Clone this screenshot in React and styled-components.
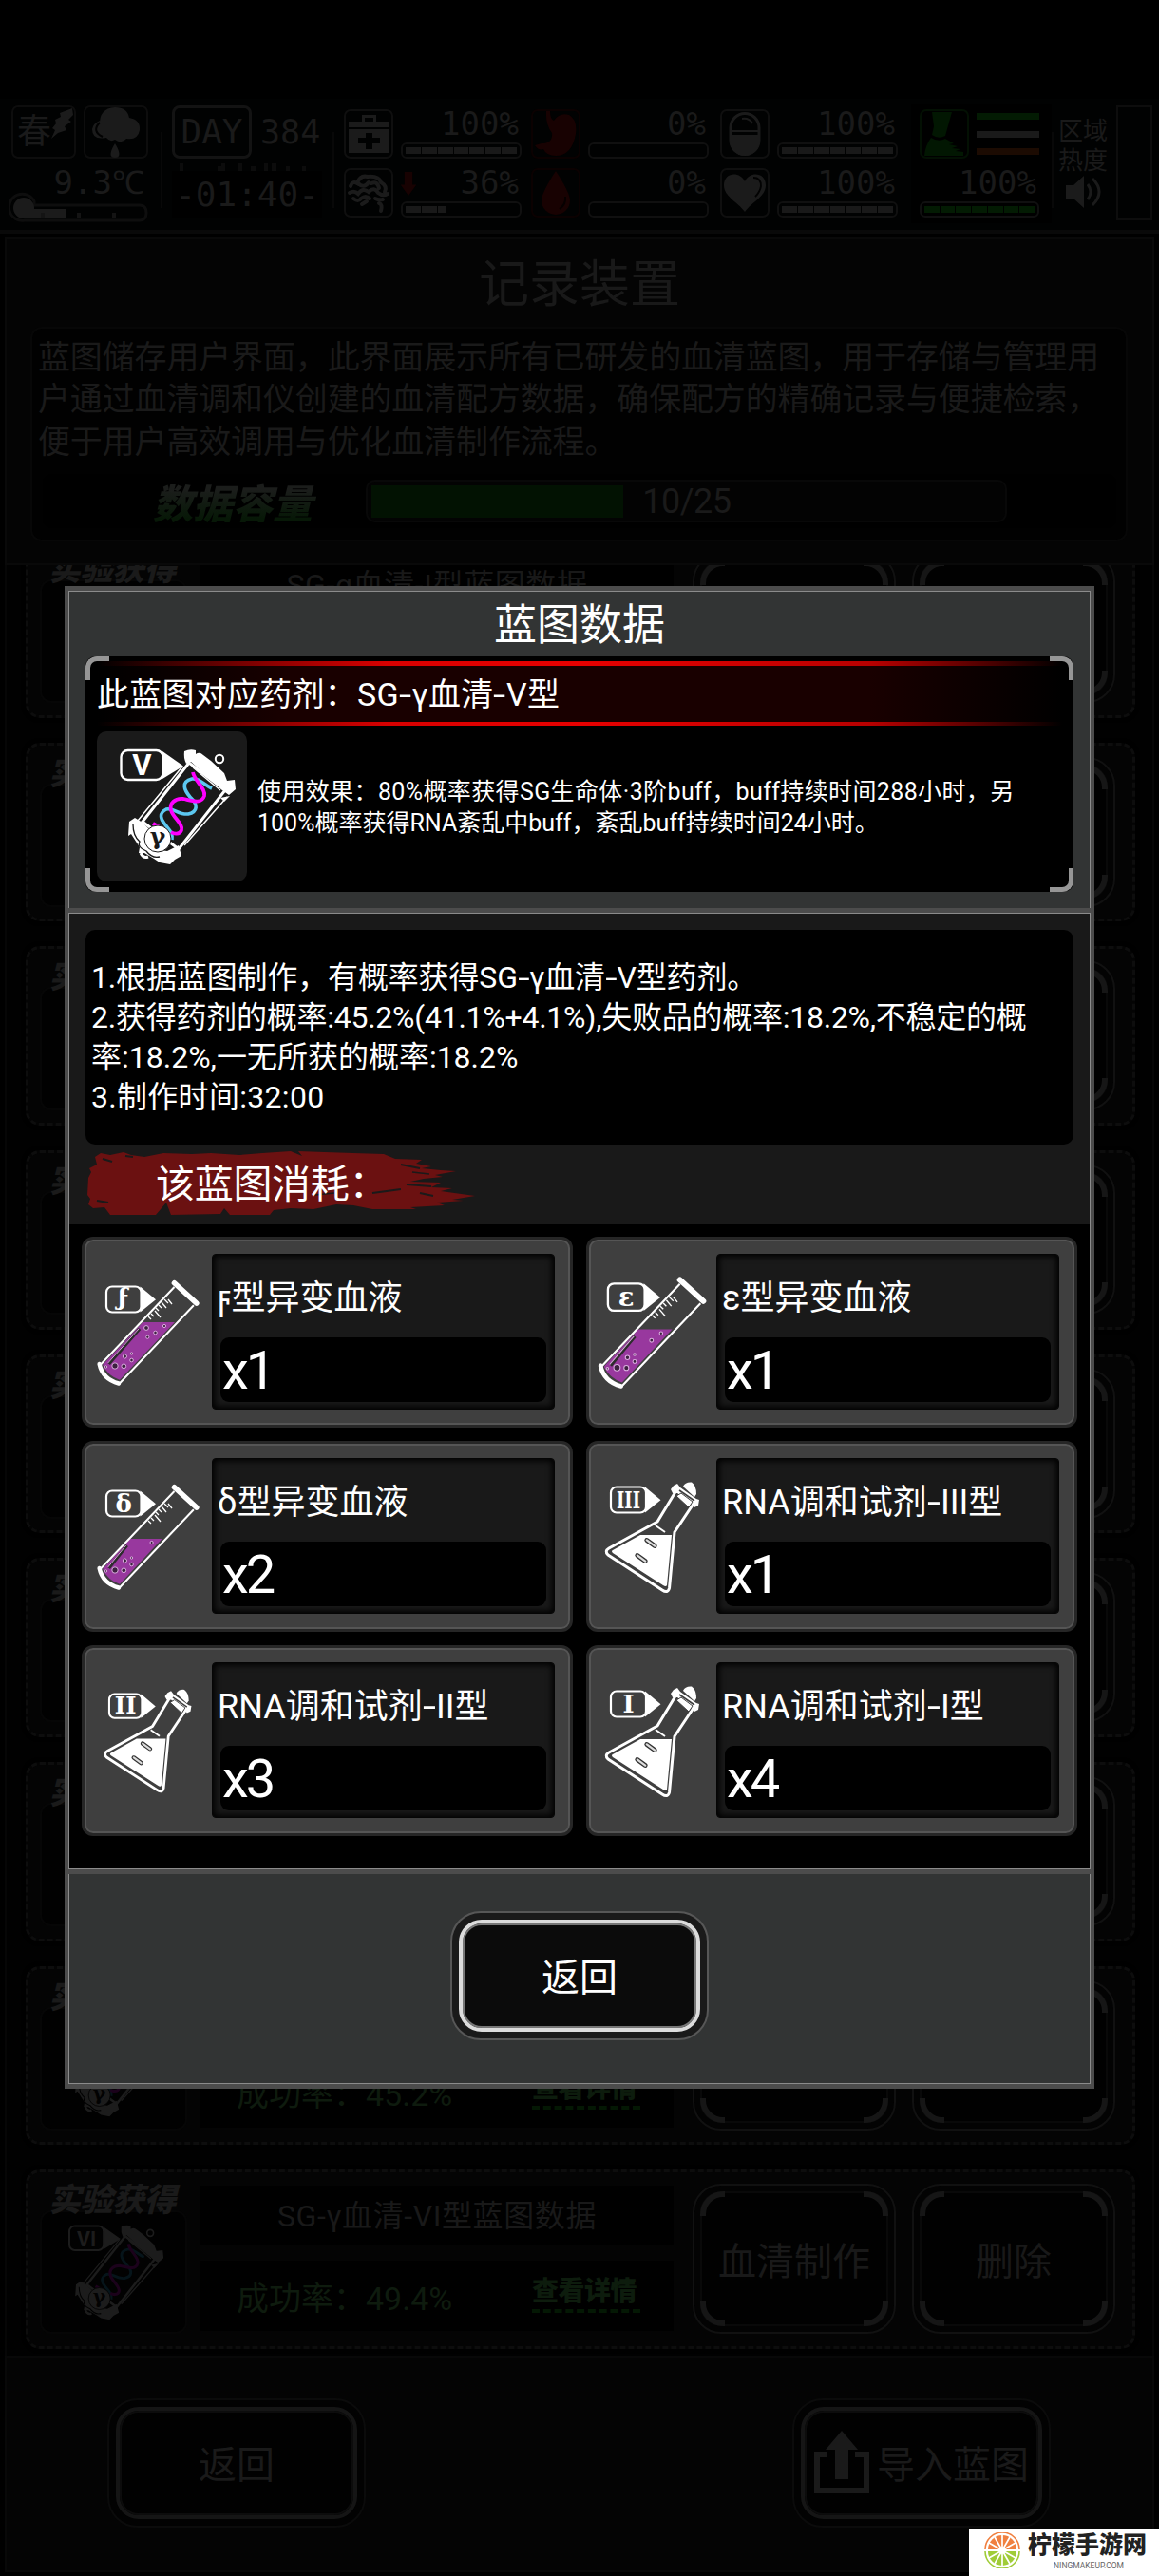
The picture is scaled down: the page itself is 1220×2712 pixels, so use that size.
import React from 'react'
import styled, { createGlobalStyle, css } from 'styled-components'

const sans = `Roboto, 'Noto Sans CJK SC', sans-serif`
const lcd = `'DejaVu Sans Mono', 'Liberation Mono', monospace`

const materials = [
  { name: 'ϝ型异变血液', count: 1, icon: 'tube', tag: 'ϝ', level: 51, size: 1 },
  { name: 'ε型异变血液', count: 1, icon: 'tube', tag: 'ε', level: 59, size: 1.06 },
  { name: 'δ型异变血液', count: 2, icon: 'tube', tag: 'δ', level: 64, size: 1 },
  { name: 'RNA调和试剂-III型', count: 1, icon: 'flask', tag: 'III', size: 1 },
  { name: 'RNA调和试剂-II型', count: 3, icon: 'flask', tag: 'II', size: 0.93 },
  { name: 'RNA调和试剂-I型', count: 4, icon: 'flask', tag: 'I', size: 1 }
]

const blueprints = [
  { id: 1, series: 'α', level: 'I' },
  { id: 2 },
  { id: 3 },
  { id: 4 },
  { id: 5 },
  { id: 6 },
  { id: 7 },
  { id: 8, series: 'γ', level: 'V', rate: '45.2%' },
  { id: 9, series: 'γ', level: 'VI', rate: '49.4%' }
]

//Icons-------------------------------------------------------------------------

const SerumIcon = ({ level, series, width = 158, height = 158, line = '#fff', back = '#1a1a1a', pink = '#ff00ff', blue = '#5cc8f0' }) => (
  <svg width={width} height={height} viewBox='0 0 158 158' fill='none'>
    <path d='M69 21 L91 36.5 L69 50 Z' fill={line} />
    <rect x='25.5' y='20' width='44' height='31' rx='7' fill={back} stroke={line} strokeWidth='2.4' />
    <text x='47.5' y='46' textAnchor='middle' fontFamily='Roboto, sans-serif' fontWeight='700' fontSize={level === 'VI' ? 26 : 31} fill={line}>
      {level}
    </text>
    <path d='M97 33 L48 95 L86 124 L135 62 Z' fill={back} stroke={line} strokeWidth='3' />
    <path d='M90 37 L43 94 M137 69 L92 120 M101 38 L130 62' stroke={line} strokeWidth='1.5' />
    <path
      d='M92 21 Q98 18 104 20 L104 24 Q108 21 112 25 L120 31 L134 44 L137 52 L145 51 L146 61 L139 67 L132 62 L99 32 L94 34 Q91 28 92 21 Z'
      fill={line}
    />
    <circle cx='129' cy='29' r='4.2' stroke={line} strokeWidth='2' />
    <path d='M130 70 L140 68 L134 74 Z' fill={line} />
    <path d='M121 60 C112 56 108 49 100 50 C88 53 92 62 98 69 C107 77 106 85 96 87 C86 88 80 80 73 82 C65 86 67 92 71 97 C76 104 80 106 79 114' stroke={blue} strokeWidth='3.6' />
    <path d='M101 43 C103 53 115 60 113 68 C110 77 100 73 91 71 C82 70 76 76 78 83 C80 91 91 97 89 104 C87 109 81 108 78 106 M59 97 L66 101' stroke={pink} strokeWidth='3.8' />
    <path
      d='M40 91 L48 96 L56 104 L50 112 L58 124 L74 126 L86 120 L89 131 L82 135 L77 140 L66 138 L60 134 L50 128 L44 128 L45 122 L36 108 L33 110 L34 95 Z'
      fill={line}
    />
    <path d='M38 98 Q38 110 45 116 Q42 122 52 126 Q58 134 66 132' stroke={back} strokeWidth='1.3' />
    <circle cx='64' cy='113' r='14' fill={line} stroke={back} strokeWidth='1' />
    <path d='M46 128 q3 6 8 4' stroke={line} strokeWidth='3' />
    <text x='64' y='119' textAnchor='middle' fontFamily='DejaVu Serif, serif' fontWeight='700' fontSize='25' fill={back}>
      {series}
    </text>
  </svg>
)

const TagShape = ({ x, w, tag }) => (
  <>
    <path d={`M${x + w - 1} 13.5 L${x + w + 15.5} 27.3 L${x + w - 1} 40.5 Z`} fill='#fff' />
    <rect x={x} y='13.5' width={w} height='27' rx='6' fill='#3f3f3f' stroke='#fff' strokeWidth='2.2' />
    <text x={x + w / 2} y={tag === 'ϝ' ? 33 : 36} textAnchor='middle' fontFamily='DejaVu Serif, serif' fontWeight='700' fontSize={tag.length > 2 ? 25 : 26} textLength={tag.length === 3 ? 25 : undefined} lengthAdjust='spacingAndGlyphs' fill='#fff'>
      {tag}
    </text>
  </>
)

const TubeIcon = ({ tag, level, size }) => {
  // the sides are slanted, so the surface shifts right as the level rises
  const shift = (level - 51) * 1.03
  return (
    <svg width={118 * size} height={122 * size} viewBox='0 0 118 122' fill='none'>
      <path d='M86.5 14 L7.6 97 Q12 111 27.6 116.7 L106.9 33.3 Z' fill='#3f3f3f' />
      <path d={`M${53.3 - shift} ${level} L${87 - shift} ${level} L29 111.7 Q17 108 11 96 Z`} fill='#98389e' />
      <path d={`M${50 - shift} ${level + 7} L17.6 95`} stroke='#2c2c2c' strokeWidth='3.4' />
      <path d={`M${49 - shift} ${level + 7} L16.6 94`} stroke='#d9a5dc' strokeWidth='1' />
      <path d='M86.5 14 L7.6 97 M106.9 33.3 L27.6 116.7' stroke='#fff' strokeWidth='2' />
      <path d='M7.6 95 Q11 111 28 115.5' stroke='#fff' strokeWidth='4.4' strokeLinecap='round' />
      <path d='M86.5 9.8 L109.8 31' stroke='#fff' strokeWidth='5.6' strokeLinecap='round' />
      <path d='M80 27 l4 5 M76 27 l4 4 M73 30 l5 6 M70 33 l3 3 M67 36 l3 3 M66 39 l6 7 M62 42 l3 3 M59 45 l3 3' stroke='#fff' strokeWidth='1.3' />
      <g fill='#3c213f' stroke='#dcaee0' strokeWidth='1'>
        <circle cx={76 - shift} cy={level + 4} r='1.6' />
        {level < 60 && <circle cx={66.5 - shift} cy={level + 11} r='1.8' />}
        {level < 52 && <circle cx='57' cy='57' r='2.4' />}
        {level < 52 && <circle cx='58.3' cy='66.7' r='1.6' />}
        <circle cx='34.4' cy='87' r='2.1' />
        <circle cx='41.5' cy='84' r='1.2' />
        <circle cx='33.3' cy='97.3' r='2.4' />
        <circle cx='41.5' cy='91' r='1.8' />
        <circle cx='24' cy='97' r='3.2' />
        <circle cx='14.5' cy='98' r='1.2' />
      </g>
      <TagShape x={15} w={36.5} tag={tag} />
    </svg>
  )
}

const FlaskIcon = ({ tag, size }) => (
  <svg width={118 * size} height={130 * size} viewBox='2 0 118 130' fill='none'>
    <path
      d='M86 17 L66 50 L15 78 Q10 81 14 85 L71 122 Q77 126 78.5 120 L84 61 L104 31'
      fill='#3f3f3f'
      stroke='#fff'
      strokeWidth='3'
      strokeLinejoin='round'
    />
    <path d='M48 64 L81 64 L76 117 Q75 119 72 117 L19 83 Q17 81 19 80 Z' fill='#fff' />
    <path d='M64 54 L74 61' stroke='#fff' strokeWidth='2' />
    <g fill='#ddd' stroke='#333' strokeWidth='1.3'>
      <rect x='-7' y='-1.8' width='14' height='3.6' rx='1.8' transform='translate(59 72.5) rotate(36)' />
      <rect x='-7' y='-1.8' width='14' height='3.6' rx='1.8' transform='translate(49 88.5) rotate(36)' />
    </g>
    <path d='M93 13 Q95 8 102 8.5 Q107 12 107 21 L105 24 Z' fill='#fff' />
    <path d='M83 12 L87 10 L90 14 L107 26 L110 27 L109 33 L105 35 L102 31 L87 20 L82 20 L80 16 Z' fill='#fff' />
    <path d='M89 17 L105 28' stroke='#3f3f3f' strokeWidth='1.6' />
    <path d='M86 23 L91 20 L103 29 L99 35 Z' fill='#fff' stroke='#3f3f3f' strokeWidth='1' />
    <TagShape x={17} w={37} tag={tag} />
  </svg>
)

const BrushStroke = () => (
  <svg width='410' height='68' viewBox='0 0 410 68' fill='#6b1111'>
    <path d='M8 6 L14 2 L24 4 L38 1 L46 4 L60 6 L80 2 L110 3 L130 2 L160 4 L184 2 L214 0 L226 5 L222 0 L250 1 L280 2 L312 3 L324 8 L352 9 L346 13 L362 16 L352 18 L372 20 L388 21 L366 25 L374 27 L354 29 L340 32 L372 33 L362 38 L384 39 L372 42 L408 47 L384 51 L396 52 L368 54 L376 57 L340 59 L346 61 L300 61 L280 57 L262 56 L238 61 L214 60 L196 62 L192 67 L150 67 L144 60 L140 66 L88 67 L83 54 L72 67 L24 67 L18 59 L6 60 L1 56 L3 50 L0 46 L1 28 L4 22 L2 18 L10 14 Z' />
    <g stroke='#1a1a1a' fill='none'>
      <path d='M16 8 l10 3 M40 5 l8 1 M10 52 l12 2 M300 44 l30 -4 M336 35 l26 2 M330 14 l20 4 M350 44 l14 3' strokeWidth='2' />
      <path d='M240 46 l20 -2 M342 22 l18 2' strokeWidth='1.4' />
    </g>
  </svg>
)

const Kit = () => (
  <svg width='42' height='42' viewBox='0 0 42 42'>
    <path fill='#1b1b1b' fillRule='evenodd' d='M14 8 V1 H29 V8 H42 V14 H0 V8 Z M17 8 H26 V4 H17 Z M0 16 H42 V41 H0 Z M18 20 V25 H10 V31 H18 V37 H25 V31 H33 V25 H25 V20 Z' />
  </svg>
)

const Brain = () => (
  <svg width='46' height='44' viewBox='0 0 46 44' fill='none' stroke='#1b1b1b' strokeWidth='4' strokeLinecap='round'>
    <path d='M4 15 Q6 9 11 12 Q14 3 22 5 Q34 4 36 11 Q43 15 40 21 M12 12 Q18 18 23 11 M26 12 Q32 9 34 17 M3 22 Q8 19 12 23 Q17 16 23 21 Q29 15 33 22 Q38 26 43 23 M7 28 Q12 32 15 28 Q20 24 24 28 M30 28 Q34 30 38 29 M34 33 Q38 34 36 41 M16 34 L21 31' />
  </svg>
)

const Stomach = () => (
  <svg width='44' height='48' viewBox='0 0 44 48' fill='#180202'>
    <path d='M12 0 L16 0 Q16 8 20 10 Q26 1 36 4 Q45 9 43 24 Q39 47 22 47 Q12 47 9 40 Q4 42 0 36 L7 34 Q19 34 18 23 Q11 14 12 0 Z' />
  </svg>
)

const Drop = () => (
  <svg width='32' height='46' viewBox='0 0 32 46'>
    <path fill='#180202' d='M16 0 Q31 23 31 31 A15 15 0 0 1 1 31 Q1 23 16 0 Z' />
    <path fill='none' stroke='#060000' strokeWidth='2' d='M26 27 Q27 35 20 40' />
  </svg>
)

const Capsule = () => (
  <svg width='34' height='46' viewBox='0 0 34 46' fill='none'>
    <rect x='2' y='1.5' width='30' height='43' rx='15' stroke='#1b1b1b' strokeWidth='3' />
    <path d='M1 24 H33 V30 A16 16 0 0 1 1 30 Z' fill='#1b1b1b' />
    <path d='M1 20 H33 M14 7 Q22 6 25 12' stroke='#1b1b1b' strokeWidth='2' />
  </svg>
)

const Heart = () => (
  <svg width='46' height='42' viewBox='0 0 46 42'>
    <path fill='#1b1b1b' d='M23 9 C18 -2 1 -1 1 13 C1 25 15 30 23 41 C31 30 45 25 45 13 C45 -1 28 -2 23 9 Z' />
    <path fill='none' stroke='#020202' strokeWidth='1.8' d='M32 5 Q40 5 40 14 Q39 20 34 25' />
  </svg>
)

const Foot = () => (
  <svg width='42' height='46' viewBox='0 0 42 46' fill='#021702'>
    <path d='M8 0 H29 L22 25 Q15 29 8 24 L10 15 Z M7 27 Q15 32 22 28 L31 33 L26 34 L35 36 L29 38 L38 39 L33 41 L41 42 V46 H0 Q1 35 7 27 Z' />
  </svg>
)

const Speaker = () => (
  <svg width='38' height='36' viewBox='0 0 38 36' fill='none' stroke='#1b1b1b' strokeWidth='3'>
    <path d='M0 11 H8 L19 1 V35 L8 25 H0 Z' fill='#1b1b1b' stroke='none' />
    <path d='M23 10 Q29 18 23 26 M28 4 Q42 18 28 32' />
  </svg>
)

const Leaf = () => (
  <svg width='24' height='34' viewBox='0 0 24 34'>
    <path fill='#1b1b1b' d='M0 33 L4 24 L1 22 L5 17 L4 13 L10 10 L9 6 L22 1 L23 8 L18 13 L21 15 L14 20 L16 24 L7 27 Z' />
  </svg>
)

const Cloud = () => (
  <svg width='52' height='54' viewBox='0 0 52 54' fill='#1b1b1b'>
    <path d='M9 20 Q8 2 25 1 Q38 1 40 12 Q52 14 51 25 Q49 36 37 34 Q32 40 25 35 Q20 38 16 33 Q1 36 1 24 Q2 18 9 15 Z' />
    <path d='M25 39 Q34 54 25 54 Q16 54 25 39 Z' />
    <path d='M9 17 Q0 26 12 32' fill='none' stroke='#020202' strokeWidth='2' />
  </svg>
)

const ShareIcon = () => (
  <svg width='58' height='66' viewBox='0 0 58 66' fill='#1a1a1a'>
    <path d='M29 0 L46 20 H36 V51 H22 V20 H12 Z' />
    <path d='M14 22 H0 V66 H58 V22 H43 V28 H52 V60 H6 V28 H14 Z' />
  </svg>
)

const LemonLogo = () => (
  <svg width='42' height='38' viewBox='0 0 42 38' fill='none'>
    <path d='M3 18 A18 18 0 0 1 39 18' stroke='#f08040' strokeWidth='1.6' />
    <path d='M3 20 A18 18 0 0 0 39 20' stroke='#a0cc38' strokeWidth='1.6' />
    <path d='M6 18 A15 15 0 0 1 36 18 Z' fill='#f08040' />
    <path d='M6 20 A15 15 0 0 0 36 20 Z' fill='#a0cc38' />
    <path d='M0 19 H42 M21 3 V35 M13 5 L29 33 M29 5 L13 33 M7 11 L35 27 M35 11 L7 27' stroke='#fff' strokeWidth='1.7' />
    <circle cx='21' cy='19' r='3.5' fill='#fff' />
  </svg>
)

//Parts-------------------------------------------------------------------------

const Meter = ({ icon, value, filled = 0, color, tone, down }) => (
  <MeterBox>
    <IconFrame $tone={tone}>{icon}</IconFrame>
    <MeterSide>
      <MeterValue>
        {down && <DownArrow viewBox='0 0 16 24'><path d='M4 0 H12 V13 H16 L8 24 L0 13 H4 Z' /></DownArrow>}
        {value}
      </MeterValue>
      <MeterBar $color={color}>
        {[0, 1, 2, 3, 4, 5, 6].map(i => (
          <i key={i} style={{ width: `${Math.max(0, Math.min(1, filled - i)) * 16}px` }} />
        ))}
      </MeterBar>
    </MeterSide>
  </MeterBox>
)

const BlueprintRow = ({ item }) => (
  <Row>
    <RowIcon>
      <Source>实验获得</Source>
      <RowIconBox>
        {item.level && (
          <SerumIcon level={item.level} series={item.series} width={130} height={130} line='#1c1c1c' back='#020202' pink='#1b021b' blue='#06141a' />
        )}
      </RowIconBox>
    </RowIcon>
    <RowInfo>
      <RowName>{item.level && `SG-${item.series}血清-${item.level}型蓝图数据`}</RowName>
      <RowRate>
        {item.rate && <span>成功率：{item.rate}</span>}
        {item.rate && <Details>查看详情</Details>}
      </RowRate>
    </RowInfo>
    <RowButton><Corners $color='#161616' $size={26} $weight={6} $radius={24} />{item.id === 9 && '血清制作'}</RowButton>
    <RowButton><Corners $color='#161616' $size={26} $weight={6} $radius={24} />{item.id === 9 && '删除'}</RowButton>
  </Row>
)

const Corners = props => (
  <>
    <Corner {...props} $v='top' $h='left' />
    <Corner {...props} $v='top' $h='right' />
    <Corner {...props} $v='bottom' $h='left' />
    <Corner {...props} $v='bottom' $h='right' />
  </>
)

const BlueprintDialog = () => (
  <Dialog>
    <DialogHead>
      <DialogTitle>蓝图数据</DialogTitle>
      <EffectBox>
        <Corners $color='#969696' $size={25} $weight={5} $radius={12} />
        <EffectName>此蓝图对应药剂：SG<Dash>-</Dash>γ血清<Dash>-</Dash>V型</EffectName>
        <EffectBody>
          <EffectIcon><SerumIcon level='V' series='γ' /></EffectIcon>
          <EffectText>
            <TextLine $track={0.38}>使用效果：80%概率获得SG生命体·3阶buff，buff持续时间288小时，另</TextLine>
            <TextLine>100%概率获得RNA紊乱中buff，紊乱buff持续时间24小时。</TextLine>
          </EffectText>
        </EffectBody>
      </EffectBox>
    </DialogHead>
    <DialogBody>
      <Notes>
        <TextLine $track={-0.15}>1.根据蓝图制作，有概率获得SG<Dash>-</Dash>γ血清<Dash>-</Dash>V型药剂。</TextLine>
        <TextLine $track={-0.25}>2.获得药剂的概率:45.2%(41.1%+4.1%),失败品的概率:18.2%,不稳定的概</TextLine>
        <TextLine>率:18.2%,一无所获的概率:18.2%</TextLine>
        <TextLine $track={0.3}>3.制作时间:32:00</TextLine>
      </Notes>
      <CostBanner>
        <BrushStroke />
        <CostTitle>该蓝图消耗：</CostTitle>
      </CostBanner>
      <Materials>
        {materials.map(m => (
          <Card key={m.name}>
            <CardIcon>
              {m.icon === 'tube' ? <TubeIcon {...m} /> : <FlaskIcon {...m} />}
            </CardIcon>
            <CardPanel>
              <CardName>
                {m.name.split('-').map((part, i) => (
                  <React.Fragment key={part}>{i > 0 && <Dash>-</Dash>}{part}</React.Fragment>
                ))}
              </CardName>
              <CardCount>x{m.count}</CardCount>
            </CardPanel>
          </Card>
        ))}
      </Materials>
    </DialogBody>
    <DialogFoot>
      <PillButton><span>返回</span></PillButton>
    </DialogFoot>
  </Dialog>
)

const App = () => (
  <Screen>
    <GlobalStyle />
    <StatusBar>
      <Weather>
        <Square><Season>春</Season><Leaf /></Square>
        <Square><Cloud /></Square>
        <Temperature>9.3℃</Temperature>
        <Thermometer viewBox='0 0 148 34' fill='none'>
          <path d='M27 14 H138 Q145 14 145 22 Q145 30 138 30 H17 A14 14 0 1 1 27 10 Z' stroke='#0e0e0e' strokeWidth='3' />
          <circle cx='16' cy='17' r='11' fill='#1b1b1b' />
          <path d='M16 18 H60 V27 H16 Z' fill='#1b1b1b' />
          <path d='M36 22 v6 M74 22 v6 M111 22 v6' stroke='#141414' strokeWidth='4' />
        </Thermometer>
      </Weather>
      <Rule />
      <Clock>
        <DayRow><Day>DAY</Day><span>384</span></DayRow>
        <Ticks viewBox='0 0 150 8'>
          <path d='M8 0h4v8h-4z M48 3h4v-3h4v8h-8z M70 0h4v8h-4z M83 3h5v5h-5z M97 0h4v8h-4z M105 0h5v8h-5z M120 3h4v5h-4z M137 3h4v5h-4z' />
        </Ticks>
        <Time>-01:40-</Time>
      </Clock>
      <Rule />
      <Meters>
        <Meter icon={<Kit />} value='100%' filled={7} />
        <Meter icon={<Stomach />} value='0%' tone='#0b0101' />
        <Meter icon={<Capsule />} value='100%' filled={7} />
        <Meter icon={<Brain />} value='36%' filled={2.5} down />
        <Meter icon={<Drop />} value='0%' tone='#0b0101' />
        <Meter icon={<Heart />} value='100%' filled={7} />
      </Meters>
      <Body>
        <IconFrame $tone='#031003'><Foot /></IconFrame>
        <Lines><Line $color='#031b03' /><Line $color='#1a1a1a' /><Line $color='#1c0b02' /></Lines>
        <BodyValue>
          <MeterValue>100%</MeterValue>
          <MeterBar $color='#031b03'>
            {[0, 1, 2, 3, 4, 5, 6].map(i => <i key={i} />)}
          </MeterBar>
        </BodyValue>
      </Body>
      <Rule />
      <Region>区域<br />热度<Speaker /></Region>
      <HeatGauge />
    </StatusBar>
    <Intro>
      <IntroTitle>记录装置</IntroTitle>
      <IntroBox>
        <IntroText>
          蓝图储存用户界面，此界面展示所有已研发的血清蓝图，用于存储与管理用户通过血清调和仪创建的血清配方数据，确保配方的精确记录与便捷检索，便于用户高效调用与优化血清制作流程。
        </IntroText>
        <Capacity>
          <CapacityLabel>数据容量</CapacityLabel>
          <CapacityBar>
            <CapacityFill style={{ width: `${(10 / 25) * 100}%` }} />
            10/25
          </CapacityBar>
        </Capacity>
      </IntroBox>
    </Intro>
    <List>
      {blueprints.map(b => <BlueprintRow key={b.id} item={b} />)}
    </List>
    <BottomBar>
      <PillButton $dim><span>返回</span></PillButton>
      <PillButton $dim><span><ShareIcon />导入蓝图</span></PillButton>
    </BottomBar>
    <Overlay>
      <BlueprintDialog />
    </Overlay>
    <Watermark>
      <LemonLogo />
      <div>
        <SiteName>柠檬手游网</SiteName>
        <SiteUrl>NINGMAKEUP.COM</SiteUrl>
      </div>
    </Watermark>
  </Screen>
)

//Style-------------------------------------------------------------------------

const GlobalStyle = createGlobalStyle`
  * {
    box-sizing: border-box;
  }
  body {
    margin: 0;
    background: #000;
  }
  p {
    margin: 0;
  }
  button {
    font: inherit;
    padding: 0;
  }
`

const Screen = styled.div`
  position: relative;
  display: flex;
  flex-direction: column;
  width: 1220px;
  height: 2712px;
  padding-top: 104px;
  overflow: hidden;
  background: #000;
  color: #1a1a1a;
  font-family: ${sans};
`

const StatusBar = styled.div`
  display: flex;
  align-items: flex-start;
  height: 142px;
  padding: 7px 7px 0 12px;
  background: #010202;
  border-bottom: 4px solid #090909;
`

const Rule = styled.div`
  width: 2px;
  height: 80px;
  margin-top: 28px;
  background: #080808;
`

const Weather = styled.div`
  display: grid;
  grid-template-columns: 68px 68px;
  gap: 0 8px;
  width: 145px;
  margin-right: 12px;
`

const Square = styled.div`
  display: flex;
  align-items: center;
  justify-content: center;
  height: 56px;
  border: 2px solid #0d0d0d;
  border-radius: 7px;
`

const Season = styled.span`
  font-size: 36px;
  line-height: 50px;

  & + svg {
    align-self: flex-start;
    margin-right: -4px;
  }
`

const Temperature = styled.div`
  grid-column: 1 / 3;
  padding-right: 4px;
  font: 34px/34px ${lcd};
  text-align: right;
  margin-top: 8px;
`

const Thermometer = styled.svg`
  grid-column: 1 / 3;
  width: 148px;
  height: 34px;
  margin: -7px 0 0 -3px;
`

const Clock = styled.div`
  width: 158px;
  margin: 0 11px 0 10px;
`

const DayRow = styled.div`
  display: flex;
  align-items: center;
  gap: 9px;
  font: 35px/56px ${lcd};
`

const Day = styled.div`
  width: 84px;
  height: 56px;
  border: 3px solid #131313;
  border-radius: 8px;
  font-size: 36px;
  line-height: 50px;
  text-align: center;
`

const Ticks = styled.svg`
  display: block;
  width: 150px;
  height: 8px;
  margin-top: 5px;
  fill: #0c0c0c;
`

const Time = styled.div`
  height: 50px;
  background: #000;
  font: 36px/50px ${lcd};
  text-align: center;
`

const Meters = styled.div`
  display: grid;
  grid-template-columns: 187px 189px 187px;
  gap: 10px;
  margin: 4px 14px 0 10px;
`

const MeterBox = styled.div`
  display: flex;
  gap: 8px;
  height: 52px;
`

const IconFrame = styled.div`
  display: flex;
  align-items: center;
  justify-content: center;
  width: 52px;
  height: 52px;
  border: 2px solid ${p => p.$tone || '#0f0f0f'};
  border-radius: 7px;
`

const MeterSide = styled.div`
  width: 127px;
`

const MeterValue = styled.div`
  display: flex;
  justify-content: flex-end;
  height: 35px;
  padding-right: 3px;
  font: 34px/31px ${lcd};
`

const DownArrow = styled.svg`
  width: 18px;
  height: 25px;
  margin: 4px auto 0 -1px;
  fill: #180202;
`

const MeterBar = styled.div`
  display: flex;
  gap: 1px;
  height: 17px;
  padding: 3px;
  border: 2px solid #101010;
  border-radius: 6px;

  i {
    width: 16px;
    background: ${p => p.$color || '#191919'};
  }
`

const Body = styled.div`
  display: grid;
  grid-template-columns: 52px 66px;
  gap: 10px 8px;
  width: 148px;
  margin-top: -2px;
  padding: 6px 0 6px 9px;
  background: #000;
`

const Lines = styled.div`
  display: flex;
  flex-direction: column;
  justify-content: space-between;
  padding: 4px 0;
`

const Line = styled.div`
  height: 7px;
  background: ${p => p.$color};
`

const BodyValue = styled.div`
  grid-column: 1 / 3;
`

const Region = styled.div`
  width: 54px;
  margin: 12px 7px 0 5px;
  font-size: 26px;
  line-height: 31px;

  svg {
    display: block;
    margin: -1px 0 0 8px;
  }
`

const HeatGauge = styled.div`
  flex: 1;
  height: 121px;
  border: 2px solid #0d0d0d;
`

const Intro = styled.div`
  height: 345px;
  margin: 4px 5px 0;
  padding: 15px 27px 0;
  border: 2px solid #090909;
  background: #040404;
`

const IntroTitle = styled.h1`
  margin: 0;
  color: #191919;
  font-size: 53px;
  font-weight: 400;
  line-height: 66px;
  text-align: center;
`

const IntroBox = styled.div`
  height: 226px;
  margin: 11px -1px 0 -2px;
  padding: 8px 9px 0 6px;
  border: 2px solid #070707;
  border-radius: 12px;
  background: #010101;
`

const IntroText = styled.p`
  width: 1130px;
  height: 145px;
  font-size: 34px;
  letter-spacing: -0.15px;
  line-height: 44.3px;
`

const Capacity = styled.div`
  display: flex;
  align-items: center;
  height: 57px;
  margin: 0 1px 0 5px;
  padding-left: 116px;
  border-radius: 10px;
  background: #000;
`

const CapacityLabel = styled.span`
  width: 224px;
  font-size: 42px;
  font-style: italic;
  font-weight: 900;
  background: linear-gradient(#1b1d1b 30%, #071807 80%);
  background-clip: text;
  color: transparent;
`

const CapacityBar = styled.div`
  display: flex;
  align-items: center;
  gap: 20px;
  width: 675px;
  height: 45px;
  padding: 4px;
  border: 2px solid #080808;
  border-radius: 10px;
  background: #030303;
  font-size: 36px;
  letter-spacing: -0.5px;
`

const CapacityFill = styled.div`
  height: 34px;
  background: #021202;
`

const List = styled.div`
  display: flex;
  flex-direction: column;
  justify-content: flex-end;
  gap: 16px;
  height: 1885px;
  margin: 0 5px;
  padding: 0 15px 2px;
  overflow: hidden;
  border: solid #060606;
  border-width: 0 2px;
  background: #010101;
`

const Row = styled.div`
  display: flex;
  flex-shrink: 0;
  width: 1178px;
  height: 198.7px;
  padding: 17px 0 0 17px;
  border: 5px solid #000;
  border-radius: 20px;
  background: #040404;
  outline: 3px dashed #0d0d0d;
  outline-offset: -8px;
`

const RowIcon = styled.div`
  flex-shrink: 0;
  width: 151px;
  margin-right: 16px;
`

const Source = styled.div`
  position: relative;
  height: 28px;
  padding-left: 7px;
  font-size: 34px;
  font-style: italic;
  font-weight: 900;
  line-height: 30px;
  letter-spacing: -0.5px;
`

const RowIconBox = styled.div`
  display: flex;
  align-items: center;
  justify-content: center;
  height: 126px;
  padding-right: 6px;
  border-radius: 10px;
  background: #010101;
  box-shadow: 0 0 0 2px #060606;
`

const RowInfo = styled.div`
  flex-shrink: 0;
  width: 498px;
  margin-right: 20px;
`

const RowName = styled.div`
  height: 62px;
  margin-bottom: 17px;
  background: #000;
  color: #191919;
  font-size: 32px;
  line-height: 64px;
  letter-spacing: 0.6px;
  text-align: center;
`

const RowRate = styled.div`
  display: flex;
  align-items: center;
  justify-content: space-between;
  height: 74px;
  padding: 0 35px 0 38px;
  background: #000;
  color: #0e1b0e;
  font-size: 34px;
`

const Details = styled.span`
  width: 114px;
  margin-top: -4px;
  border-bottom: 4px dashed #041804;
  color: #0d1c0d;
  font-size: 28px;
  font-weight: 900;
  line-height: 36px;
  letter-spacing: -0.5px;
`

const RowButton = styled.button`
  position: relative;
  width: 214px;
  height: 158px;
  margin: -2px 17px 0 0;
  border: 2px solid #111;
  border-radius: 30px;
  background: #010101;
  box-shadow: inset 0 0 0 6px #030303, inset 0 0 0 8px #090909;
  color: #191919;
  font-size: 40px;
  flex-shrink: 0;

  &:last-child {
    margin-right: 0;
  }

  /* brackets sit on the inner ring */
  & > i {
    margin: 6px;
  }
`

const Corner = styled.i`
  position: absolute;
  ${p => p.$v}: 0;
  ${p => p.$h}: 0;
  width: ${p => p.$size}px;
  height: ${p => p.$size}px;
  ${p => css`
    border-${p.$v}: ${p.$weight}px solid ${p.$color};
    border-${p.$h}: ${p.$weight}px solid ${p.$color};
    border-${p.$v}-${p.$h}-radius: ${p.$radius}px;
  `}
`

const BottomBar = styled.div`
  display: flex;
  justify-content: space-between;
  height: 228px;
  margin: 0 5px;
  padding: 43px 107px 0 106px;
  border: 2px solid #080808;
  background: #040404;
`

const PillButton = styled.button`
  width: 272px;
  height: 136px;
  padding: 7px;
  border: 2px solid ${p => (p.$dim ? '#0b0b0b' : '#575757')};
  border-radius: 32px;
  background: ${p => (p.$dim ? '#020202' : '#1a1a1a')};
  color: ${p => (p.$dim ? '#1a1a1a' : '#fff')};
  font-size: 40px;

  span {
    display: flex;
    align-items: center;
    justify-content: center;
    gap: 8px;
    height: 118px;
    padding-bottom: 2px;
    border: 4px solid ${p => (p.$dim ? '#151515' : '#dcdcdc')};
    border-radius: 24px;
    background: ${p => (p.$dim ? '#010101' : '#0b0b0b')};
    box-shadow: inset 0 0 0 2px ${p => (p.$dim ? '#0c0c0c' : '#777')};
  }
`

const Overlay = styled.div`
  position: absolute;
  inset: 0;
  display: flex;
  align-items: center;
  justify-content: center;
  padding-top: 104px;
`

const Dialog = styled.div`
  display: grid;
  grid-template-rows: 334px 1007px 221px;
  gap: 5px;
  width: 1084px;
  height: 1582px;
  border: solid #4c4c4c;
  border-width: 5px 4px;
  background: #4c4c4c;
  color: #fff;
`

const DialogHead = styled.div`
  padding: 0 17px;
  border: 1px solid #8b8b8b;
  border-bottom: 0;
  background: #323434;
`

const DialogTitle = styled.h2`
  margin: 0;
  font-size: 45px;
  font-weight: 400;
  line-height: 70px;
  height: 68px;
  padding-top: 1px;
  text-align: center;
`

const EffectBox = styled.div`
  position: relative;
  height: 248px;
  padding: 5px 12px 0;
  border-radius: 10px;
  background: #000;
`

const EffectName = styled.div`
  height: 68px;
  background:
    linear-gradient(90deg, transparent, #d80000 30%, #e80000 50%, #b80000 80%, transparent) top / 100% 5px no-repeat,
    linear-gradient(90deg, transparent, #d80000 30%, #e80000 50%, #b80000 80%, transparent) bottom / 100% 4px no-repeat,
    linear-gradient(90deg, transparent, #190000 20%, #190000 80%, transparent);
  font-size: 34px;
  letter-spacing: 0.25px;
  line-height: 70px;
`

const Dash = styled.span`
  display: inline-block;
  transform: scaleX(1.4);
  margin: 0 0.06em;
`

const EffectBody = styled.div`
  display: flex;
  align-items: center;
  gap: 11px;
  margin-top: 6px;
`

const EffectIcon = styled.div`
  width: 158px;
  height: 158px;
  border-radius: 10px;
  background: #1a1a1a;
`

const EffectText = styled.div`
  padding-top: 1px;
  font-size: 25px;
  line-height: 33px;
`

const TextLine = styled.p`
  letter-spacing: ${p => p.$track || 0}px;
  white-space: nowrap;
`

const DialogBody = styled.div`
  border: 1px solid #8b8b8b;
  background: #191919;
`

const Notes = styled.div`
  height: 226px;
  margin: 17px 17px 7px;
  padding: 29px 6px 0;
  border-radius: 10px;
  background: #000;
  font-size: 32px;
  line-height: 42px;
`

const CostBanner = styled.div`
  display: grid;
  height: 77px;
  padding-left: 19px;

  & > * {
    grid-area: 1 / 1;
  }
`

const CostTitle = styled.div`
  padding-left: 72px;
  font-size: 41px;
  letter-spacing: -0.3px;
  line-height: 70px;
`

const Materials = styled.div`
  display: grid;
  grid-template-columns: 517px 517px;
  grid-auto-rows: 201px;
  align-content: start;
  gap: 13.8px 14px;
  height: 678px;
  padding: 13px;
  background: #000;
`

const Card = styled.div`
  display: flex;
  padding: 13px 14px 14px 0;
  border: 3px solid #262626;
  border-radius: 12px;
  background: #3f3f3f;
  box-shadow: inset 0 0 0 2px #555;
`

const CardIcon = styled.div`
  display: flex;
  align-items: center;
  justify-content: center;
  width: 134px;
`

const CardPanel = styled.div`
  flex: 1;
  margin: 2px 2px 2px 0;
  padding: 0 8px 0 6px;
  border: 1px solid #050505;
  border-radius: 4px;
  background: #191919;
  box-shadow: inset 0 0 6px 2px #000;
`

const CardName = styled.div`
  height: 87px;
  margin-left: -1px;
  font-size: 36px;
  line-height: 92px;
  white-space: nowrap;
`

const CardCount = styled.div`
  height: 68px;
  margin-left: 2px;
  padding-left: 2px;
  border-radius: 9px;
  background: #000;
  font-size: 56px;
  letter-spacing: -3px;
  line-height: 70px;
`

const DialogFoot = styled.div`
  display: flex;
  justify-content: center;
  padding-top: 39px;
  border: 1px solid #8b8b8b;
  border-top: 0;
  background: #323434;
`

const Watermark = styled.div`
  position: absolute;
  right: 0;
  bottom: 0;
  display: flex;
  gap: 6px;
  width: 200px;
  height: 50px;
  padding: 4px 0 0 14px;
  background: #fff;
  color: #222;
  line-height: 1;
`

const SiteName = styled.div`
  font-size: 25px;
  font-weight: 900;
  line-height: 28px;
`

const SiteUrl = styled.div`
  margin: 3px 0 0 27px;
  color: #666;
  font-size: 8.5px;
`

export default App
